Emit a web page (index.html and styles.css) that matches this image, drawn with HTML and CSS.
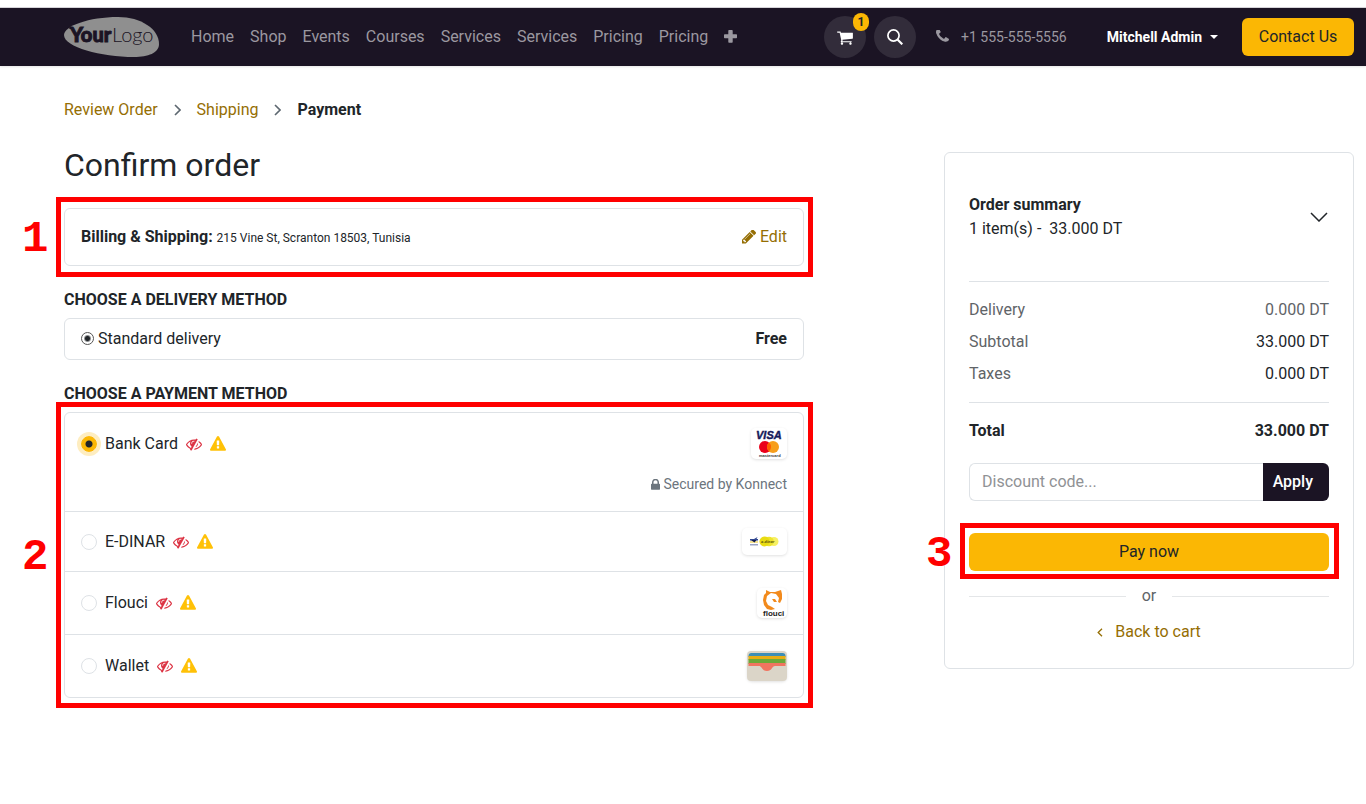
FILE: index.html
```html
<!DOCTYPE html>
<html lang="en">
<head>
<meta charset="utf-8">
<meta name="viewport" content="width=device-width, initial-scale=1">
<title>Confirm order</title>
<link rel="stylesheet" href="styles.css">
</head>
<body>
<svg class="sprite" aria-hidden="true">
  <symbol id="hidden" viewBox="0 0 1792 1792"><path d="M555 1335l78-141q-87-63-136-159t-49-203q0-121 61-225-229 117-381 353 167 258 427 375zm389-759q0-20-14-34t-34-14q-125 0-214.500 89.500t-89.500 214.500q0 20 14 34t34 14 34-14 14-34q0-86 61-147t147-61q20 0 34-14t14-34zm363-191q0 7-1 9-106 189-316 567t-315 566l-49 89q-10 16-28 16-12 0-134-70-16-10-16-28 0-12 44-87-143-65-263.500-173t-208.500-245q-20-31-20-69t20-69q153-235 380-371t496-136q89 0 180 17l54-97q10-16 28-16 5 0 18 6t31 15.500 33 18.500 31.500 18.500 19.500 11.500q16 10 16 27zm37 447q0 139-79 253.500t-209 164.500l280-502q8 45 8 84zm448 128q0 35-20 69-39 64-109 145-150 172-347.500 267t-419.500 95l74-132q212-18 392.500-137t301.500-307q-115-179-282-294l63-112q95 64 182.500 153t144.500 184q20 34 20 69z"/></symbol>
  <symbol id="warning" viewBox="0 0 1792 1792"><path d="M1024 1375v-190q0-14-9.500-23.500t-22.500-9.500h-192q-13 0-22.500 9.500t-9.500 23.500v190q0 14 9.500 23.500t22.500 9.500h192q13 0 22.500-9.500t9.500-23.500zm-2-374l18-459q0-12-10-19-13-11-24-11h-220q-11 0-24 11-10 7-10 21l17 457q0 10 10 16.500t24 6.500h185q14 0 23.500-6.500t10.500-16.500zm-14-934l768 1408q35 63-2 126-17 29-46.500 46t-63.500 17h-1536q-34 0-63.500-17t-46.500-46q-37-63-2-126l768-1408q17-31 47-49t65-18 65 18 47 49z"/></symbol>
  <symbol id="chevron" viewBox="0 0 7 12"><path d="M1 1 6 6 1 11" fill="none" stroke="currentColor" stroke-width="1.600"/></symbol>
</svg>

<header class="topbar">
  <a class="logo" href="#" aria-label="Your Logo">
    <svg viewBox="0 0 95 40" width="95" height="40">
      <path d="M0 18C0 9 25 0 54 0C77 0 95 12 95 27C95 36 84 40 70 40C37 40 0 30 0 18Z" fill="#8f8f8f"/>
      <text class="logo-bold" x="6" y="25">Your</text>
      <text class="logo-light" x="48" y="25">Logo</text>
      <path d="M4 10.500h5v1.500h-3Z" fill="#1b1424"/>
    </svg>
  </a>
  <nav class="menu" aria-label="Main">
    <a href="#">Home</a><a href="#">Shop</a><a href="#">Events</a><a href="#">Courses</a><a href="#">Services</a><a href="#">Services</a><a href="#">Pricing</a><a href="#">Pricing</a>
    <button class="plain more" type="button" aria-label="More"><svg viewBox="0 0 13 13" width="13" height="13"><path d="M5 0h3q.7 0 .7.7v3.600h3.600q.7 0 .7.7v2.600q0 .7-.7.7h-3.600v3.700q0 .7-.7.7h-3q-.7 0-.7-.7v-3.700h-3.600q-.7 0-.7-.7v-2.600q0-.7.7-.7h3.600v-3.600q0-.7.7-.7z" fill="currentColor"/></svg></button>
  </nav>
  <div class="tools">
    <a class="round" href="#" aria-label="Cart">
      <svg viewBox="0 0 1664 1792" width="16" height="17"><path fill="currentColor" d="M640 1536q0 52-38 90t-90 38-90-38-38-90 38-90 90-38 90 38 38 90zm896 0q0 52-38 90t-90 38-90-38-38-90 38-90 90-38 90 38 38 90zm128-1088v512q0 24-16.500 42.500t-40.500 21.500l-1044 122q13 60 13 70 0 16-24 64h920q26 0 45 19t19 45-19 45-45 19h-1024q-26 0-45-19t-19-45q0-11 8-31.500t16-36 21.500-40 15.500-29.500l-177-823h-204q-26 0-45-19t-19-45 19-45 45-19h256q16 0 28.500 6.500t19.500 15.500 13 24.500 8 26 5.500 29.500 4.500 26h1201q26 0 45 19t19 45z"/></svg>
      <span class="count">1</span>
    </a>
    <button class="plain round" type="button" aria-label="Search"><svg viewBox="0 0 16 16" width="16" height="16" fill="none" stroke="currentColor"><circle cx="6.500" cy="6.500" r="5.600" stroke-width="1.700"/><path d="M10.500 10.500 15.300 15.300" stroke-width="2.200"/></svg></button>
  </div>
  <a class="phone" href="#"><svg viewBox="192 256 1408 1408" width="13" height="13"><path fill="currentColor" d="M1600 1240q0 27-10 70.500t-21 68.500q-21 50-122 106-94 51-186 51-27 0-53-3.500t-57.500-12.500-47-14.500-55.500-20.500-49-18q-98-35-175-83-127-79-264-216t-216-264q-48-77-83-175-3-9-18-49t-20.500-55.500-14.500-47-12.500-57.500-3.500-53q0-92 51-186 56-101 106-122 25-11 68.500-21t70.500-10q14 0 21 3 18 6 53 76 11 19 30 54t35 63.500 31 53.500q3 4 17.500 25t21.500 35.500 7 28.500q0 20-28.500 50t-62 55-62 53-28.500 46q0 9 5 22.500t8.500 20.500 14 24 11.500 19q76 137 174 235t235 174q2 1 19 11.500t24 14 20.500 8.500 22.500 5q18 0 46-28.500t53-62 55-62 50-28.500q14 0 28.500 7t35.500 21.500 25 17.500q25 15 53.500 31t63.500 35 54 30q70 35 76 53 3 7 3 21z"/></svg>+1 555-555-5556</a>
  <button class="plain user" type="button">Mitchell Admin <span class="caret"></span></button>
  <a class="cta" href="#">Contact Us</a>
</header>

<main class="page">
  <nav class="crumbs" aria-label="Checkout steps">
    <a href="#">Review Order</a><svg width="7" height="12"><use href="#chevron"/></svg><a href="#">Shipping</a><svg width="7" height="12"><use href="#chevron"/></svg><strong>Payment</strong>
  </nav>
  <div class="columns">
    <section class="checkout">
      <h1>Confirm order</h1>
      <div class="box address marked">
        <p><strong>Billing &amp; Shipping:</strong> <small>215 Vine St, Scranton 18503, Tunisia</small></p>
        <a href="#"><svg viewBox="128 200 1515 1515" width="14" height="14"><path fill="currentColor" d="M491 1536l91-91-235-235-91 91v107h128v128h107zm523-928q0-22-22-22-10 0-17 7l-542 542q-7 7-7 17 0 22 22 22 10 0 17-7l542-542q7-7 7-17zm-54-192l416 416-832 832h-416v-416zm683 96q0 53-37 90l-166 166-416-416 166-165q36-38 90-38 53 0 91 38l235 234q37 39 37 91z"/></svg>Edit</a>
        <span class="mark"></span><span class="step">1</span>
      </div>

      <h2>CHOOSE A DELIVERY METHOD</h2>
      <div class="box delivery">
        <label><input type="radio" name="delivery" class="dot" checked>Standard delivery</label>
        <strong>Free</strong>
      </div>

      <h2>CHOOSE A PAYMENT METHOD</h2>
      <div class="box methods marked">
        <div class="method">
          <div class="line">
            <input class="choice" type="radio" name="pay" id="card" checked><label for="card">Bank Card</label>
            <svg class="off"><use href="#hidden"/></svg><svg class="warn"><use href="#warning"/></svg>
            <svg class="brand" viewBox="0 0 36 31" width="36" height="31" role="img" aria-label="Visa and Mastercard">
              <text class="visa" x="5" y="11">VISA</text>
              <circle cx="14" cy="19" r="6" fill="#eb001b"/><circle cx="22" cy="19" r="6" fill="#f79e1b"/><path d="M18 14.500a6 6 0 0 1 0 9a6 6 0 0 1 0-9Z" fill="#ff5f00"/>
              <text class="tiny" x="8" y="29">mastercard</text>
            </svg>
          </div>
          <p class="secured"><svg viewBox="320 192 1152 1344" width="9" height="11"><path fill="currentColor" d="M640 768h512v-192q0-106-75-181t-181-75-181 75-75 181v192zm832 96v576q0 40-28 68t-68 28h-960q-40 0-68-28t-28-68v-576q0-40 28-68t68-28h32v-192q0-184 132-316t316-132 316 132 132 316v192h32q40 0 68 28t28 68z"/></svg>Secured by Konnect</p>
        </div>
        <div class="method">
          <div class="line">
            <input class="choice" type="radio" name="pay" id="edinar"><label for="edinar">E-DINAR</label>
            <svg class="off"><use href="#hidden"/></svg><svg class="warn"><use href="#warning"/></svg>
            <svg class="brand" viewBox="0 0 45 27" width="45" height="27" role="img" aria-label="e-dinar">
              <path d="M8 11h4l3.500-2-1 2h1.500v1.500H8Z" fill="#304690"/><path d="M8 13.500h8v1H8Z" fill="#e8c321"/><path d="M9 12l5.500 0-2 2.500Z" fill="#101b50"/><path d="M8 16h8v1.500H8Z" fill="#9aa4c5"/>
              <circle cx="32" cy="13.500" r="4.500" fill="#f7f063"/><circle cx="27" cy="13.500" r="4.800" fill="#eee32c"/><circle cx="22.500" cy="13.500" r="5" fill="#e9dc12"/>
              <text class="dinar" x="19" y="15">e-dinar</text>
            </svg>
          </div>
        </div>
        <div class="method">
          <div class="line">
            <input class="choice" type="radio" name="pay" id="flouci"><label for="flouci">Flouci</label>
            <svg class="off"><use href="#hidden"/></svg><svg class="warn"><use href="#warning"/></svg>
            <svg class="brand" viewBox="0 0 30 30" width="30" height="30" role="img" aria-label="Flouci">
              <path d="M9 2l4 2h5l6-2 1 4v5l-2 4-2-1 1-4-3-4-5-1-4 3-1 5 2 4 4 2 3 2-4 1-4-1-3-4-1-5 1-5 2-2Z" fill="#f28a1c"/><path d="M15 11l3 0 2 3-3 0Z" fill="#f28a1c"/>
              <text class="flouci" x="6" y="28">flouci</text>
            </svg>
          </div>
        </div>
        <div class="method">
          <div class="line">
            <input class="choice" type="radio" name="pay" id="wallet"><label for="wallet">Wallet</label>
            <svg class="off"><use href="#hidden"/></svg><svg class="warn"><use href="#warning"/></svg>
            <svg class="brand" viewBox="0 0 40 30" width="40" height="30" role="img" aria-label="Wallet">
              <rect width="40" height="30" rx="4" fill="#dbd5c8"/><path d="M1.500 5a3 3 0 0 1 3-3h31a3 3 0 0 1 3 3v1h-37Z" fill="#3d8eb5"/><path d="M1.500 5h37v4h-37Z" fill="#e8ad12"/><path d="M1.500 8h37v5h-37Z" fill="#6ca839"/><path d="M1.500 12h37v3H28c-3 0-3 5-8 5s-5-5-8-5H1.500Z" fill="#f17460"/>
            </svg>
          </div>
        </div>
        <span class="mark"></span><span class="step">2</span>
      </div>
    </section>

    <aside class="summary">
      <button class="plain toggle" type="button">
        <span><strong>Order summary</strong><br>1 item(s) -&nbsp; 33.000 DT</span>
        <svg viewBox="0 0 18 10" width="18" height="10"><path d="M1 1 9 9 17 1" fill="none" stroke="currentColor" stroke-width="1.500"/></svg>
      </button>
      <table>
        <tbody>
          <tr class="muted"><th scope="row">Delivery</th><td>0.000 DT</td></tr>
          <tr><th scope="row">Subtotal</th><td>33.000 DT</td></tr>
          <tr><th scope="row">Taxes</th><td>0.000 DT</td></tr>
        </tbody>
        <tfoot>
          <tr><th scope="row">Total</th><td>33.000 DT</td></tr>
        </tfoot>
      </table>
      <form class="promo">
        <input type="text" placeholder="Discount code..." aria-label="Discount code">
        <button type="button">Apply</button>
      </form>
      <div class="pay marked">
        <button type="button">Pay now</button>
        <span class="mark"></span><span class="step">3</span>
      </div>
      <div class="or">or</div>
      <a class="back" href="#"><svg viewBox="0 0 6 9" width="6" height="9"><path d="M5 .8 1.200 4.500 5 8.200" fill="none" stroke="currentColor" stroke-width="1.300"/></svg>Back to cart</a>
    </aside>
  </div>
</main>
</body>
</html>
```
FILE: styles.css
```css
* { box-sizing: border-box; }

body {
  margin: 0;
  padding-top: 7px;
  background: #fff;
  color: #212529;
  font: 16px/24px Roboto, "Liberation Sans", sans-serif;
}

h1, h2, p { margin: 0; }
a { color: #956e03; text-decoration: none; }
svg { display: block; flex: none; }
button, input { font: inherit; }

.sprite { position: absolute; width: 0; height: 0; }

.plain {
  padding: 0;
  border: 0;
  background: none;
  color: inherit;
}

/* Top bar */
.topbar {
  display: flex;
  align-items: center;
  height: 59px;
  padding: 0 12px 0 64px;
  border-top: 1px solid #d5d3d8;
  background: #1b1424;
  color: #9b98a0;
  box-shadow: 0 1px 2px rgba(0, 0, 0, .1);
}
.topbar a { color: inherit; }
.logo-bold { font: 900 20px Lato, sans-serif; fill: #1b1424; stroke: #1b1424; stroke-width: 1px; }
.logo-light { font: 300 20px Lato, sans-serif; fill: #1b1424; }
.menu {
  display: flex;
  align-items: center;
  gap: 16px;
  margin: 0 auto 0 32px;
  white-space: nowrap;
}
.more { padding-bottom: 2px; }
.tools { display: flex; gap: 8px; }
.round {
  position: relative;
  display: flex;
  align-items: center;
  justify-content: center;
  width: 42px;
  height: 42px;
  border-radius: 50%;
  background: #322c3a;
}
.topbar .round { color: #fff; }
.count {
  position: absolute;
  top: -3px;
  right: -3px;
  width: 16px;
  border-radius: 9px;
  background: #fbb704;
  color: #212529;
  font-size: 12px;
  font-weight: 700;
  line-height: 18px;
  text-align: center;
}
.phone {
  display: flex;
  align-items: center;
  gap: 12px;
  margin-left: 20px;
  font-size: 14px;
  white-space: nowrap;
}
.phone svg { margin-bottom: 2px; }
.user {
  display: flex;
  align-items: center;
  gap: 8px;
  margin-left: 40px;
  color: #fff;
  font-size: 14px;
  font-weight: 700;
  white-space: nowrap;
}
.caret {
  border: 4px solid transparent;
  border-top-color: #fff;
  border-bottom: 0;
}
.topbar .cta {
  min-width: 112px;
  margin-left: 24px;
  padding: 7px 16px;
  border-radius: 6px;
  background: #fbb704;
  color: #212529;
  text-align: center;
  white-space: nowrap;
}

/* Page */
.page { padding: 32px 12px 96px 64px; }
.crumbs {
  display: flex;
  align-items: center;
  gap: 16px;
  margin-bottom: 24px;
}
.crumbs svg { color: #5d6770; }
.columns {
  display: grid;
  grid-template-columns: minmax(0, 1fr) 410px;
  column-gap: 140px;
  align-items: start;
}
h1 {
  margin-bottom: 24px;
  font-size: 32px;
  font-weight: 400;
  line-height: 38px;
}
h2 {
  margin: 22px 0 6px;
  font-size: 16px;
  font-weight: 700;
  line-height: 24px;
}
.box {
  border: 1px solid #dee2e6;
  border-radius: 6px;
}
.address, .delivery {
  display: flex;
  align-items: center;
  justify-content: space-between;
  padding: 8px 16px;
}
.address { padding: 16px; }
.address small { font-size: 12px; line-height: 16px; }
.address a { display: flex; align-items: center; gap: 4px; }
.delivery label { display: flex; align-items: center; gap: 4px; }
.dot {
  appearance: none;
  width: 13px;
  height: 13px;
  margin: 0 0 2px;
  border: 1px solid #555;
  border-radius: 50%;
  background: radial-gradient(circle, #212529 2px, #fff 4px);
}

.method { padding: 16px; }
.method:first-child { padding-top: 15px; }
.method + .method { border-top: 1px solid #dee2e6; }
.line { display: flex; align-items: center; gap: 8px; }
.choice {
  flex: none;
  appearance: none;
  width: 16px;
  height: 16px;
  margin: 0;
  border: 1px solid #dee2e6;
  border-radius: 50%;
}
.choice:checked {
  border-color: #fbb704;
  background: radial-gradient(circle, #212529 3px, #fbb704 4px);
  box-shadow: 0 0 0 4px #feedc0;
}
.off, .warn { width: 16px; height: 16px; }
.off { fill: #dc3545; }
.warn { fill: #ffc107; }
.brand {
  overflow: visible;
  margin-left: auto;
  border-radius: 5px;
  box-shadow: 0 1px 3px rgba(0, 0, 0, .12);
}
.visa { font: italic 700 11px "Liberation Sans", sans-serif; fill: #15195a; stroke: #15195a; stroke-width: .4px; }
.tiny { font: 700 4px "Liberation Sans", sans-serif; fill: #333; }
.dinar { font: italic 700 4px "Open Sans", sans-serif; fill: #65600c; }
.flouci { font: 700 8px "Liberation Sans", sans-serif; fill: #222; }
.secured {
  display: flex;
  align-items: center;
  justify-content: flex-end;
  gap: 4px;
  margin-top: 15px;
  color: #6c757d;
  font-size: 14px;
  line-height: 21px;
}

/* Numbered highlights */
.marked { position: relative; }
.mark {
  position: absolute;
  inset: -11px -10px -11px -9px;
  border: 5px solid #f00;
  pointer-events: none;
}
.address .mark { inset: -12px -10px -12px -9px; }
.pay .mark { inset: -10px -10px -8px -9px; }
.step {
  position: absolute;
  top: 50%;
  left: -43px;
  padding-top: 4px;
  transform: translateY(-50%);
  color: #f00;
  font: 700 44px/44px "Liberation Mono", monospace;
}

/* Order summary */
.summary {
  margin-top: 6px;
  padding: 24px;
  border: 1px solid #dee2e6;
  border-radius: 6px;
}
.toggle {
  display: flex;
  align-items: center;
  justify-content: space-between;
  width: 100%;
  padding: 16px 1px 40px 0;
  text-align: left;
}
.summary table { width: 100%; border-collapse: collapse; }
.summary th {
  padding: 4px 0;
  color: #5f6468;
  font-weight: 400;
  text-align: left;
}
.summary td { padding: 4px 0; text-align: right; }
.summary .muted td { color: #5f6468; }
.summary tbody { border-top: 1px solid #dee2e6; }
.summary tbody tr:first-child > * { padding-top: 16px; }
.summary tbody tr:last-child > * { padding-bottom: 16px; }
.summary tfoot { border-top: 1px solid #dee2e6; }
.summary tfoot tr > * {
  padding: 16px 0 20px;
  color: #212529;
  font-weight: 700;
}
.promo { display: flex; margin-bottom: 32px; }
.promo input {
  flex: 1;
  min-width: 0;
  height: 38px;
  padding: 6px 12px 8px;
  border: 1px solid #dee2e6;
  border-right: 0;
  border-radius: 6px 0 0 6px;
  color: #212529;
}
.promo input::placeholder { color: #909295; }
.promo button {
  padding: 6px 16px 6px 10px;
  border: 0;
  border-radius: 0 6px 6px 0;
  background: #1b1424;
  color: #fff;
  font-weight: 500;
}
.pay button {
  display: block;
  width: 100%;
  padding: 7px;
  border: 0;
  border-radius: 6px;
  background: #fbb704;
  color: #212529;
}
.or {
  display: flex;
  align-items: center;
  gap: 16px;
  margin: 13px 0 12px;
  color: #5f6468;
}
.or::before, .or::after {
  content: "";
  flex: 1;
  border-top: 1px solid #e4e6e8;
}
.back {
  display: flex;
  align-items: center;
  justify-content: center;
  gap: 12px;
}
```
